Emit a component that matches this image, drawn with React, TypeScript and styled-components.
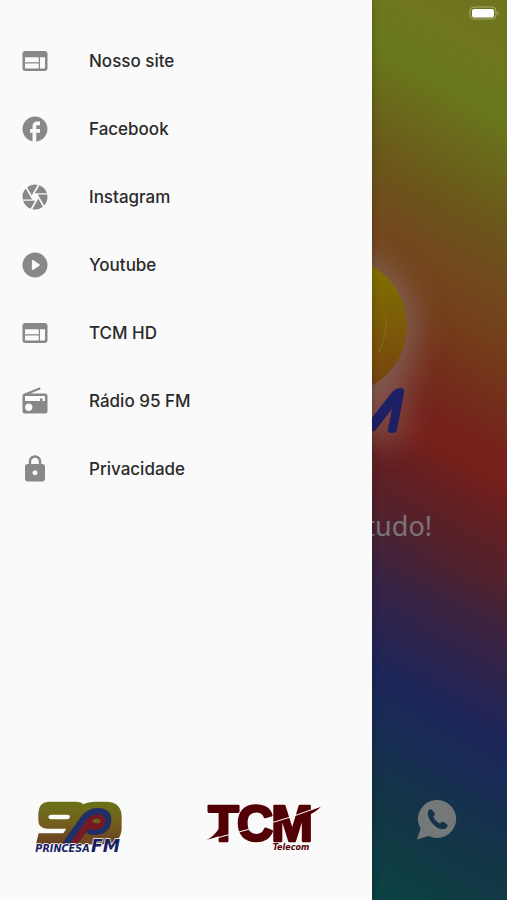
import React from "react";
import type { ReactNode } from "react";
import styled, { createGlobalStyle } from "styled-components";
import { MdCamera, MdFacebook, MdLock, MdRadio, MdWeb } from "react-icons/md";

const GlobalStyle = createGlobalStyle`
  *, *::before, *::after { box-sizing: border-box; }
  body { margin: 0; font-family: Inter, "Liberation Sans", sans-serif; }
`;

const Screen = styled.div`
  position: relative;
  min-height: 100vh;
  overflow: hidden;
  display: flex;
`;

const Player = styled.main`
  flex: 1;
  display: flex;
  flex-direction: column;
  background: linear-gradient(
    209deg,
    #6f741f 0%,
    #6f761f 5%,
    #69781c 10%,
    #6b551a 20%,
    #73491e 25%,
    #73401a 29%,
    #75211b 39%,
    #76201a 41%,
    #621f22 45%,
    #50222e 50%,
    #3c2340 54%,
    #2a2450 59%,
    #1d2659 63%,
    #182c55 67%,
    #133646 74%,
    #0c4243 82%,
    #0a4838 100%
  );
`;

const StatusBar = styled.header`
  display: flex;
  justify-content: flex-end;
  padding: 6px 6px 0;
`;

const Cover = styled.div`
  display: flex;
  justify-content: center;
  margin-top: 200px;
`;

const Slogan = styled.p`
  margin: 0 75px;
  text-align: right;
  font-family: "Noto Sans", "Open Sans", sans-serif;
  font-size: 27px;
  line-height: 40px;
  color: #7d747b;
`;

const ChatButton = styled.button`
  align-self: flex-end;
  margin: auto 50px 60px;
  padding: 0;
  border: 0;
  background: none;
  display: flex;
  color: #757878;
  cursor: pointer;
`;

const Drawer = styled.aside`
  position: absolute;
  inset: 0 auto 0 0;
  width: 372px;
  max-width: 85%;
  display: flex;
  flex-direction: column;
  justify-content: space-between;
  padding: 27px 0 44px;
  background: #fafafa;
  box-shadow: 0 0 8px rgba(0, 0, 0, 0.25);
`;

const Menu = styled.ul`
  list-style: none;
  margin: 0;
  padding: 0;
`;

const MenuLink = styled.a`
  display: flex;
  align-items: center;
  gap: 39px;
  height: 68px;
  padding: 0 20px;
  font-size: 17px;
  font-weight: 500;
  color: #2a2a2a;
  text-decoration: none;

  svg {
    flex: none;
    color: #888;
  }
`;

const Sponsors = styled.footer`
  display: flex;
  align-items: flex-end;
  gap: 82px;
  padding: 0 34px;
`;

const SponsorLink = styled.a`
  display: flex;
`;

const BatteryIcon = () => (
  <svg width="32" height="15" viewBox="0 0 32 15" aria-label="Bateria">
    <rect x="1" y="1" width="26" height="12" rx="4" fill="none" stroke="#a9ac70" />
    <rect x="3" y="3" width="22" height="8.500" rx="2" fill="#fff" />
    <path d="M28.500 5v4.500c1.600-.8 1.600-3.700 0-4.500z" fill="#a9ac70" />
  </svg>
);

const PlayIcon = () => (
  <svg width="30" height="30" viewBox="0 0 24 24">
    <path
      fill="currentColor"
      fillRule="evenodd"
      d="M12 2a10 10 0 1 0 0 20 10 10 0 0 0 0-20zM9.500 8.900c0-.7.700-1 1.300-.7l4.700 3.200c.5.3.5.9 0 1.200l-4.700 3.200c-.6.3-1.300 0-1.300-.7z"
    />
  </svg>
);

const ChatIcon = () => (
  <svg width="40" height="40" viewBox="0 0 40 40" fill="currentColor">
    <path d="M20.500 0a19 19 0 1 1-8.800 36L0 39.500l3.600-11A19 19 0 0 1 20.500 0z" />
    <path
      fill="#15324a"
      d="M11.500 10.500c1.400-1.500 3-1.800 3.800-.6l2.500 3.700c.7 1.100-.6 2.200-1.500 3.200 1.300 3 3.700 5.300 6.700 6.700 1.200-1 2.300-2.200 3.500-1.500l3.400 2.200c1.300.9.700 2.700-.8 4-2.800 2.400-8.200.6-12.300-3.300-4.400-4.200-7.700-11.600-5.300-14.400z"
    />
  </svg>
);

const CoverArt = () => (
  <svg width="360" height="285" viewBox="74 220 360 285" overflow="visible" aria-hidden="true">
    <defs>
      <filter id="glow" x="-50%" y="-50%" width="200%" height="200%">
        <feGaussianBlur stdDeviation="15" />
      </filter>
      <linearGradient id="disc" x1="0" y1="0" x2="0" y2="1">
        <stop offset="0" stopColor="#807500" />
        <stop offset=".35" stopColor="#7d6206" />
        <stop offset="1" stopColor="#764010" />
      </linearGradient>
    </defs>
    <g filter="url(#glow)" fill="#84685f" opacity=".8">
      <circle cx="338" cy="328" r="80" />
      <path d="M330 370H410L405 440H330z" opacity=".7" />
    </g>
    <circle cx="338" cy="325" r="69" fill="url(#disc)" />
    <path d="M386 315q1 20-7 36" fill="none" stroke="#8b6a1b" />
    <path d="M360 432L393 390q3-3 8-3 4 0 3 5l-7 37q-1 3-5 3-5 0-4-4l4-20-17 22z" fill="#1e2065" />
  </svg>
);

const PrincesaLogo = () => (
  <svg width="90" height="56" viewBox="42 45 270 168" role="img" aria-label="90 Princesa FM">
    <defs>
      <linearGradient id="olive" x1="0" y1="0" x2="0" y2="1">
        <stop offset="0" stopColor="#697218" />
        <stop offset=".5" stopColor="#735f1c" />
        <stop offset="1" stopColor="#693f21" />
      </linearGradient>
    </defs>
    <path
      fill="url(#olive)"
      fillRule="evenodd"
      d="M84 50H168Q184 50 190 58Q204 50 226 50H258Q305 51 305 96V130Q303 178 254 178H48L56 145H130L139 131H82Q54 130 55 104V84Q57 52 84 50zM94 89Q85 90 85 97Q86 103 94 103H140Q150 102 150 94Q149 89 142 89z"
    />
    <path
      fill="none"
      stroke="#203066"
      strokeWidth="22"
      d="M138 178L190 104Q207 79 236 80Q264 81 263 106Q261 139 222 139H196"
    />
    <path
      fill="none"
      stroke="#741a25"
      strokeWidth="20"
      d="M160 178L206 114Q217 98 235 98Q248 99 246 109Q243 124 221 124H198"
    />
    <ellipse cx="230" cy="108" rx="12" ry="7" fill="#735f1c" />
    <path d="M174 178L200 142Q206 151 222 150H262L244 178z" fill="#704a20" />
    <g
      fill="#171f63"
      stroke="#fafafa"
      strokeWidth="4"
      paintOrder="stroke"
      fontFamily="DejaVu Sans, sans-serif"
      fontWeight="700"
      fontStyle="italic"
    >
      <text x="46" y="201" fontSize="29">
        PRINCESA
      </text>
      <text x="213" y="200" fontSize="52">
        FM
      </text>
    </g>
  </svg>
);

const TcmLogo = () => (
  <svg width="116" height="63" viewBox="35 8 348 189" role="img" aria-label="TCM Telecom">
    <g fill="#520006" fontWeight="700">
      <text
        x="42 128 231"
        y="152"
        fontSize="150"
        fontFamily="Liberation Sans, Arial, sans-serif"
        stroke="#520006"
        strokeWidth="8"
        strokeLinejoin="round"
      >
        TCM
      </text>
      <path d="M37 149Q60 138 77 110V136Q58 143 37 149z" />
      <path d="M300 78L382 47Q365 66 336 77L338 66z" />
      <path d="M37 151Q120 129 210 104T382 47" fill="none" stroke="#fafafa" strokeWidth="3" />
      <text x="235" y="179" fontSize="24" fontStyle="italic" fontFamily="DejaVu Sans, sans-serif">
        Telecom
      </text>
    </g>
  </svg>
);

const items: { label: string; icon: ReactNode }[] = [
  { label: "Nosso site", icon: <MdWeb size={30} /> },
  { label: "Facebook", icon: <MdFacebook size={30} /> },
  { label: "Instagram", icon: <MdCamera size={30} /> },
  { label: "Youtube", icon: <PlayIcon /> },
  { label: "TCM HD", icon: <MdWeb size={30} /> },
  { label: "Rádio 95 FM", icon: <MdRadio size={30} /> },
  { label: "Privacidade", icon: <MdLock size={30} /> },
];

export default function App() {
  return (
    <>
      <GlobalStyle />
      <Screen>
        <Player>
          <StatusBar>
            <BatteryIcon />
          </StatusBar>
          <Cover>
            <CoverArt />
          </Cover>
          <Slogan>tudo!</Slogan>
          <ChatButton type="button" aria-label="WhatsApp">
            <ChatIcon />
          </ChatButton>
        </Player>
        <Drawer>
          <nav>
            <Menu>
              {items.map(({ label, icon }) => (
                <li key={label}>
                  <MenuLink href="#">
                    {icon}
                    {label}
                  </MenuLink>
                </li>
              ))}
            </Menu>
          </nav>
          <Sponsors>
            <SponsorLink href="#">
              <PrincesaLogo />
            </SponsorLink>
            <SponsorLink href="#">
              <TcmLogo />
            </SponsorLink>
          </Sponsors>
        </Drawer>
      </Screen>
    </>
  );
}
